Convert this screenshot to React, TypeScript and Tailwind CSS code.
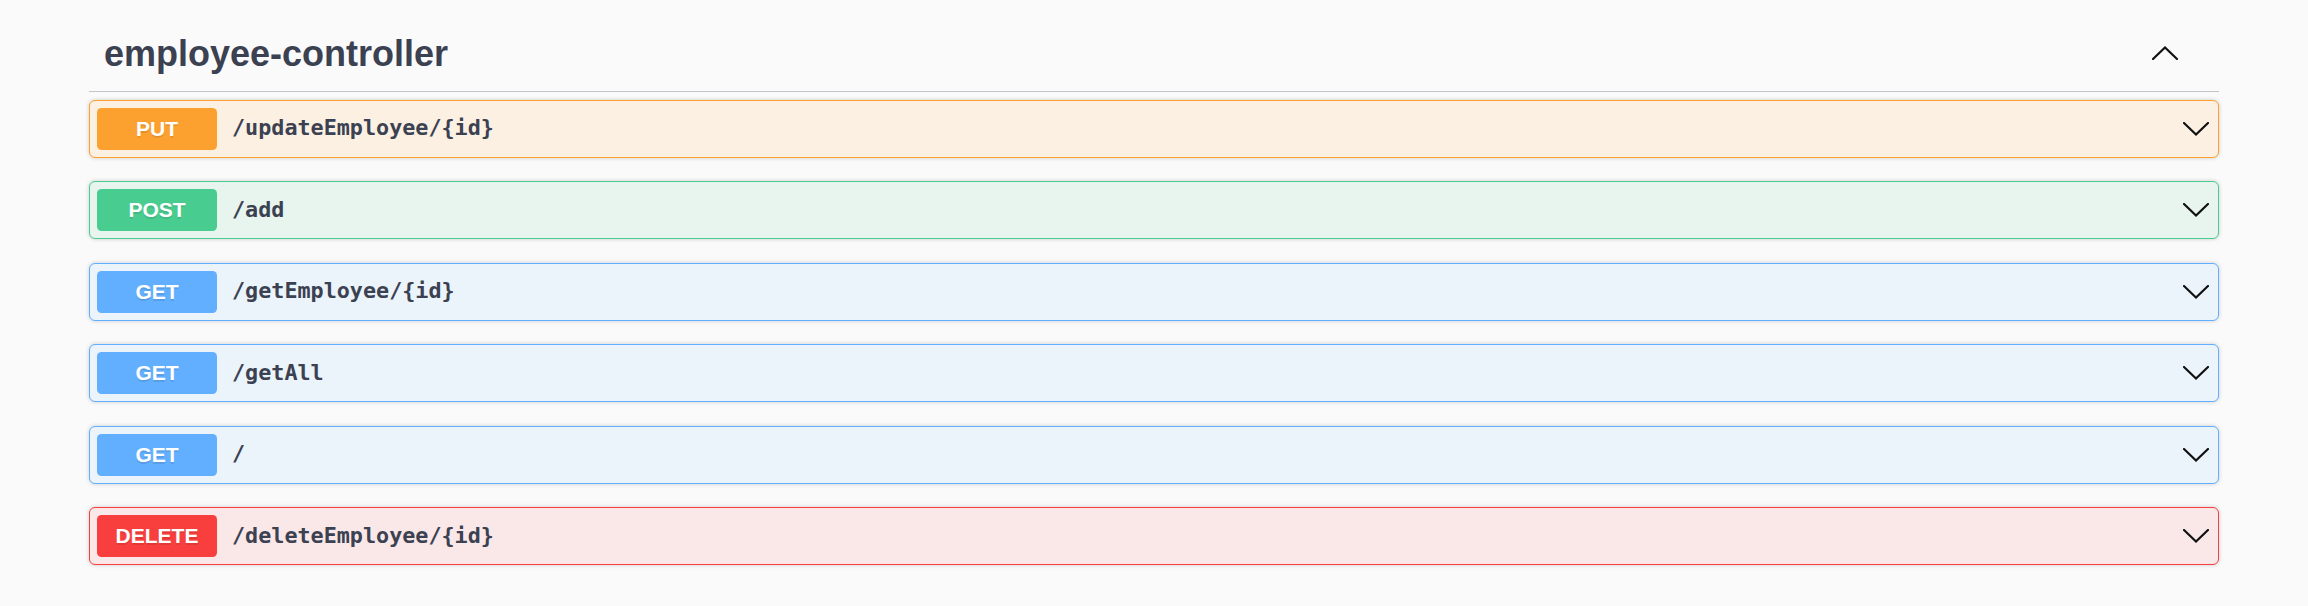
const operations = [
  { method: 'PUT', path: '/updateEmployee/{id}', badge: 'bg-[#fca130]', border: 'border-[#fca130]', bg: 'bg-[#fcf0e3]' },
  { method: 'POST', path: '/add', badge: 'bg-[#49cc90]', border: 'border-[#49cc90]', bg: 'bg-[#e7f5ee]' },
  { method: 'GET', path: '/getEmployee/{id}', badge: 'bg-[#61affe]', border: 'border-[#61affe]', bg: 'bg-[#ebf3fb]' },
  { method: 'GET', path: '/getAll', badge: 'bg-[#61affe]', border: 'border-[#61affe]', bg: 'bg-[#ebf3fb]' },
  { method: 'GET', path: '/', badge: 'bg-[#61affe]', border: 'border-[#61affe]', bg: 'bg-[#ebf3fb]' },
  { method: 'DELETE', path: '/deleteEmployee/{id}', badge: 'bg-[#f93e3e]', border: 'border-[#f93e3e]', bg: 'bg-[#fae7e7]' },
];

function Chevron({ up = false }: { up?: boolean }) {
  return (
    <svg width="26" height="14" viewBox="0 0 26 14" className="shrink-0">
      <polyline
        points={up ? '1,13 13,1.5 25,13' : '1,1 13,12.5 25,1'}
        fill="none"
        stroke="#111"
        strokeWidth="2.2"
        strokeLinecap="round"
        strokeLinejoin="miter"
      />
    </svg>
  );
}

export default function App() {
  return (
    <div className="min-h-[606px] bg-[#fafafa] pt-[15px]" style={{ fontFamily: '"Liberation Sans", Arial, sans-serif' }}>
      <div className="mx-auto max-w-[2190px] px-[30px]">
        <div className="flex h-[77px] items-center justify-between border-b border-[#c4c5ca] pl-[15px] pr-[41px] mb-[7.5px]">
          <h3 className="text-[36px] font-bold leading-[41px] text-[#3b4151]">employee-controller</h3>
          <Chevron up />
        </div>

        {operations.map(op => (
          <div
            key={op.method + op.path}
            className={`mb-[23.5px] flex items-center rounded-[6px] border p-[7px] pr-[9px] shadow-[0_0_4px_rgba(0,0,0,0.19)] ${op.border} ${op.bg}`}
          >
            <div
              className={`flex h-[42px] w-[120px] shrink-0 items-center justify-center rounded-[4.5px] text-[21px] font-bold text-white [text-shadow:0_1.5px_0_rgba(0,0,0,0.1)] ${op.badge}`}
            >
              {op.method}
            </div>
            <div
              className="flex-1 px-[15px] text-[21.75px] font-bold text-[#3b4151]"
              style={{ fontFamily: '"DejaVu Sans Mono", "Liberation Mono", monospace' }}
            >
              {op.path}
            </div>
            <Chevron />
          </div>
        ))}
      </div>
    </div>
  );
}
